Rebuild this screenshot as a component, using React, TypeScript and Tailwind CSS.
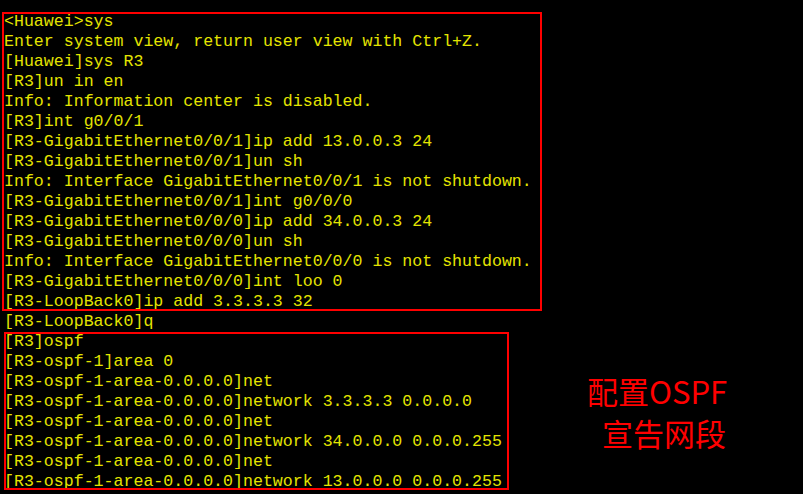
const lines = [
  '<Huawei>sys',
  'Enter system view, return user view with Ctrl+Z.',
  '[Huawei]sys R3',
  '[R3]un in en',
  'Info: Information center is disabled.',
  '[R3]int g0/0/1',
  '[R3-GigabitEthernet0/0/1]ip add 13.0.0.3 24',
  '[R3-GigabitEthernet0/0/1]un sh',
  'Info: Interface GigabitEthernet0/0/1 is not shutdown.',
  '[R3-GigabitEthernet0/0/1]int g0/0/0',
  '[R3-GigabitEthernet0/0/0]ip add 34.0.0.3 24',
  '[R3-GigabitEthernet0/0/0]un sh',
  'Info: Interface GigabitEthernet0/0/0 is not shutdown.',
  '[R3-GigabitEthernet0/0/0]int loo 0',
  '[R3-LoopBack0]ip add 3.3.3.3 32',
  '[R3-LoopBack0]q',
  '[R3]ospf',
  '[R3-ospf-1]area 0',
  '[R3-ospf-1-area-0.0.0.0]net',
  '[R3-ospf-1-area-0.0.0.0]network 3.3.3.3 0.0.0.0',
  '[R3-ospf-1-area-0.0.0.0]net',
  '[R3-ospf-1-area-0.0.0.0]network 34.0.0.0 0.0.0.255',
  '[R3-ospf-1-area-0.0.0.0]net',
  '[R3-ospf-1-area-0.0.0.0]network 13.0.0.0 0.0.0.255',
];

export default function App() {
  return (
    <div className="relative w-[803px] h-[494px] overflow-hidden bg-black">
      {/* Console output */}
      <pre className="pt-[12px] pl-[4px] font-['Liberation_Mono','Courier_New',monospace] text-[16.6px] leading-[20px] text-[#e4e400] whitespace-pre">
        {lines.map((line, i) => (
          <div key={i}>{line}</div>
        ))}
      </pre>

      {/* Annotation boxes */}
      <div className="absolute left-[2px] top-[12px] w-[540px] h-[299px] border-2 border-[#ff0000]" />
      <div className="absolute left-[4px] top-[332px] w-[505px] h-[158px] border-2 border-[#ff0000]" />

      {/* Annotation label */}
      <div className="absolute left-[587px] top-[370px] font-['Noto_Sans_CJK_SC',sans-serif] text-[31px] leading-[42px] text-[#ff0000]">
        <div>配置OSPF</div>
        <div className="pl-[15px]">宣告网段</div>
      </div>
    </div>
  );
}
